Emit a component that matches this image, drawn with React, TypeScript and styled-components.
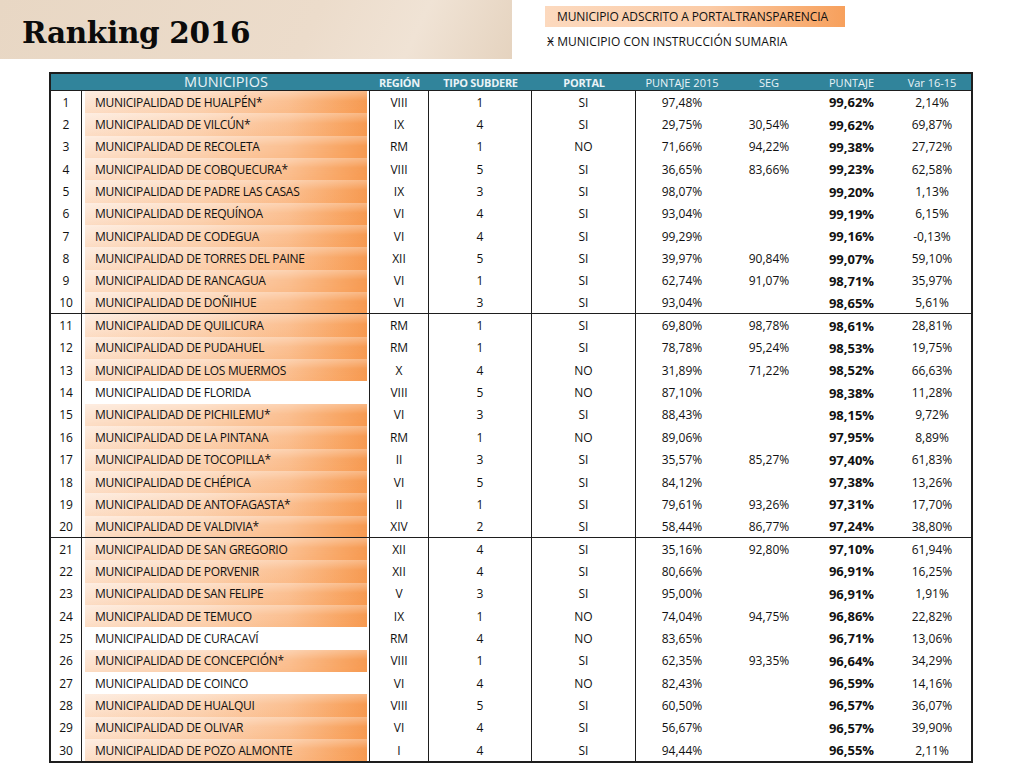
import React from "react";
import styled, { createGlobalStyle } from "styled-components";

const Global = createGlobalStyle`
  html, body { margin: 0; padding: 0; background: #ffffff; }
  body { font-family: "Open Sans", "Liberation Sans", sans-serif; color: #111; }
  * { box-sizing: border-box; }
`;

type Rec = {
  name: string;
  region: string;
  tipo: string;
  portal: string;
  p2015: string;
  seg: string;
  puntaje: string;
  variation: string;
  plain?: boolean;
};

const data: Rec[] = [
  { name: "HUALPÉN*", region: "VIII", tipo: "1", portal: "SI", p2015: "97,48%", seg: "", puntaje: "99,62%", variation: "2,14%" },
  { name: "VILCÚN*", region: "IX", tipo: "4", portal: "SI", p2015: "29,75%", seg: "30,54%", puntaje: "99,62%", variation: "69,87%" },
  { name: "RECOLETA", region: "RM", tipo: "1", portal: "NO", p2015: "71,66%", seg: "94,22%", puntaje: "99,38%", variation: "27,72%" },
  { name: "COBQUECURA*", region: "VIII", tipo: "5", portal: "SI", p2015: "36,65%", seg: "83,66%", puntaje: "99,23%", variation: "62,58%" },
  { name: "PADRE LAS CASAS", region: "IX", tipo: "3", portal: "SI", p2015: "98,07%", seg: "", puntaje: "99,20%", variation: "1,13%" },
  { name: "REQUÍNOA", region: "VI", tipo: "4", portal: "SI", p2015: "93,04%", seg: "", puntaje: "99,19%", variation: "6,15%" },
  { name: "CODEGUA", region: "VI", tipo: "4", portal: "SI", p2015: "99,29%", seg: "", puntaje: "99,16%", variation: "-0,13%" },
  { name: "TORRES DEL PAINE", region: "XII", tipo: "5", portal: "SI", p2015: "39,97%", seg: "90,84%", puntaje: "99,07%", variation: "59,10%" },
  { name: "RANCAGUA", region: "VI", tipo: "1", portal: "SI", p2015: "62,74%", seg: "91,07%", puntaje: "98,71%", variation: "35,97%" },
  { name: "DOÑIHUE", region: "VI", tipo: "3", portal: "SI", p2015: "93,04%", seg: "", puntaje: "98,65%", variation: "5,61%" },
  { name: "QUILICURA", region: "RM", tipo: "1", portal: "SI", p2015: "69,80%", seg: "98,78%", puntaje: "98,61%", variation: "28,81%" },
  { name: "PUDAHUEL", region: "RM", tipo: "1", portal: "SI", p2015: "78,78%", seg: "95,24%", puntaje: "98,53%", variation: "19,75%" },
  { name: "LOS MUERMOS", region: "X", tipo: "4", portal: "NO", p2015: "31,89%", seg: "71,22%", puntaje: "98,52%", variation: "66,63%" },
  { name: "FLORIDA", region: "VIII", tipo: "5", portal: "NO", p2015: "87,10%", seg: "", puntaje: "98,38%", variation: "11,28%", plain: true },
  { name: "PICHILEMU*", region: "VI", tipo: "3", portal: "SI", p2015: "88,43%", seg: "", puntaje: "98,15%", variation: "9,72%" },
  { name: "LA PINTANA", region: "RM", tipo: "1", portal: "NO", p2015: "89,06%", seg: "", puntaje: "97,95%", variation: "8,89%" },
  { name: "TOCOPILLA*", region: "II", tipo: "3", portal: "SI", p2015: "35,57%", seg: "85,27%", puntaje: "97,40%", variation: "61,83%" },
  { name: "CHÉPICA", region: "VI", tipo: "5", portal: "SI", p2015: "84,12%", seg: "", puntaje: "97,38%", variation: "13,26%" },
  { name: "ANTOFAGASTA*", region: "II", tipo: "1", portal: "SI", p2015: "79,61%", seg: "93,26%", puntaje: "97,31%", variation: "17,70%" },
  { name: "VALDIVIA*", region: "XIV", tipo: "2", portal: "SI", p2015: "58,44%", seg: "86,77%", puntaje: "97,24%", variation: "38,80%" },
  { name: "SAN GREGORIO", region: "XII", tipo: "4", portal: "SI", p2015: "35,16%", seg: "92,80%", puntaje: "97,10%", variation: "61,94%" },
  { name: "PORVENIR", region: "XII", tipo: "4", portal: "SI", p2015: "80,66%", seg: "", puntaje: "96,91%", variation: "16,25%" },
  { name: "SAN FELIPE", region: "V", tipo: "3", portal: "SI", p2015: "95,00%", seg: "", puntaje: "96,91%", variation: "1,91%" },
  { name: "TEMUCO", region: "IX", tipo: "1", portal: "NO", p2015: "74,04%", seg: "94,75%", puntaje: "96,86%", variation: "22,82%" },
  { name: "CURACAVÍ", region: "RM", tipo: "4", portal: "NO", p2015: "83,65%", seg: "", puntaje: "96,71%", variation: "13,06%", plain: true },
  { name: "CONCEPCIÓN*", region: "VIII", tipo: "1", portal: "SI", p2015: "62,35%", seg: "93,35%", puntaje: "96,64%", variation: "34,29%" },
  { name: "COINCO", region: "VI", tipo: "4", portal: "NO", p2015: "82,43%", seg: "", puntaje: "96,59%", variation: "14,16%", plain: true },
  { name: "HUALQUI", region: "VIII", tipo: "5", portal: "SI", p2015: "60,50%", seg: "", puntaje: "96,57%", variation: "36,07%" },
  { name: "OLIVAR", region: "VI", tipo: "4", portal: "SI", p2015: "56,67%", seg: "", puntaje: "96,57%", variation: "39,90%" },
  { name: "POZO ALMONTE", region: "I", tipo: "4", portal: "SI", p2015: "94,44%", seg: "", puntaje: "96,55%", variation: "2,11%" },
];

const COLS = "31px 288px 59px 103px 104px 92px 82px 83px 78px";

const Page = styled.div`
  width: 1024px;
  height: 768px;
  display: flex;
  flex-direction: column;
  overflow: hidden;
`;

const Top = styled.div`
  display: flex;
  height: 72px;
`;

const Banner = styled.div`
  width: 512px;
  height: 59px;
  background: linear-gradient(115deg, #e8d7c4 0%, #ecdccb 60%, #f0e3d5 80%, #e5d3bf 100%);
  display: flex;
  align-items: center;
  padding-left: 22px;
`;

const Title = styled.h1`
  margin: 0;
  font-family: "DejaVu Serif", "Liberation Serif", serif;
  font-weight: 900;
  font-size: 29.5px;
  letter-spacing: -0.3px;
  color: #0b0b0b;
  line-height: 1;
  padding-top: 6px;
`;

const Legend = styled.div`
  margin-left: 33px;
  padding-top: 6px;
  display: flex;
  flex-direction: column;
  gap: 7px;
`;

const LegendTag = styled.div`
  width: 300px;
  height: 21px;
  background: linear-gradient(to right, #fcd9be 0%, #fbcba6 55%, #f7a05c 100%);
  font-size: 12px;
  letter-spacing: -0.1px;
  line-height: 21px;
  padding-left: 12px;
  color: #111;
  white-space: nowrap;
`;

const LegendNote = styled.div`
  font-size: 12px;
  letter-spacing: 0.05px;
  line-height: 16px;
  padding-left: 2px;
  color: #111;
  white-space: nowrap;
`;

const Table = styled.div`
  margin-left: 49px;
  width: 924px;
  border: 2px solid #1e1e1e;
  display: flex;
  flex-direction: column;
`;

const HeaderRow = styled.div`
  display: grid;
  grid-template-columns: ${COLS};
  height: 17px;
  background: #31849b;
  border-bottom: 1px solid #1e1e1e;
`;

const HeadCell = styled.div<{ $big?: boolean; $bold?: boolean }>`
  display: flex;
  align-items: center;
  justify-content: center;
  color: #e9f3f7;
  font-size: ${(p) => (p.$big ? "14.5px" : "11px")};
  font-weight: ${(p) => (p.$bold ? 700 : 400)};
  line-height: 1;
  white-space: nowrap;
  letter-spacing: ${(p) => (p.$bold ? "-0.3px" : "0")};
`;

const Row = styled.div<{ $groupEnd?: boolean }>`
  display: grid;
  grid-template-columns: ${COLS};
  height: 22.35px;
  border-bottom: ${(p) => (p.$groupEnd ? "1.5px solid #1e1e1e" : "none")};
`;

const Cell = styled.div<{ $line?: boolean; $bold?: boolean }>`
  display: flex;
  align-items: center;
  justify-content: center;
  font-size: ${(p) => (p.$bold ? "13px" : "12px")};
  font-weight: ${(p) => (p.$bold ? 700 : 400)};
  border-right: ${(p) => (p.$line ? "1px solid #1e1e1e" : "none")};
  white-space: nowrap;
  color: #111;
`;

const NameCell = styled.div`
  display: flex;
  align-items: stretch;
  padding: 0 2px 0 3px;
  border-right: 1px solid #1e1e1e;
`;

const NameFill = styled.div<{ $plain?: boolean }>`
  flex: 1;
  display: flex;
  align-items: center;
  padding-left: 10px;
  font-size: 12px;
  letter-spacing: -0.3px;
  white-space: nowrap;
  color: #111;
  background: ${(p) =>
    p.$plain
      ? "#ffffff"
      : "linear-gradient(to bottom, rgba(255,255,255,0.3) 0%, rgba(255,255,255,0) 45%, rgba(247,150,70,0.12) 100%), linear-gradient(to right, #fde6d5 0%, #fcd6b8 40%, #fbc092 72%, #f8a563 92%, #f69a52 100%)"};
`;

export default function App() {
  return (
    <Page>
      <Global />
      <Top>
        <Banner>
          <Title>Ranking 2016</Title>
        </Banner>
        <Legend>
          <LegendTag>MUNICIPIO ADSCRITO A PORTALTRANSPARENCIA</LegendTag>
          <LegendNote>Ӿ MUNICIPIO CON INSTRUCCIÓN SUMARIA</LegendNote>
        </Legend>
      </Top>
      <Table>
        <HeaderRow>
          <HeadCell />
          <HeadCell $big>MUNICIPIOS</HeadCell>
          <HeadCell $bold>REGIÓN</HeadCell>
          <HeadCell $bold>TIPO SUBDERE</HeadCell>
          <HeadCell $bold>PORTAL</HeadCell>
          <HeadCell>PUNTAJE 2015</HeadCell>
          <HeadCell>SEG</HeadCell>
          <HeadCell>PUNTAJE</HeadCell>
          <HeadCell>Var 16-15</HeadCell>
        </HeaderRow>
        {data.map((r, i) => (
          <Row key={i} $groupEnd={i === 9 || i === 19}>
            <Cell $line>{i + 1}</Cell>
            <NameCell>
              <NameFill $plain={r.plain}>MUNICIPALIDAD DE {r.name}</NameFill>
            </NameCell>
            <Cell $line>{r.region}</Cell>
            <Cell $line>{r.tipo}</Cell>
            <Cell $line>{r.portal}</Cell>
            <Cell>{r.p2015}</Cell>
            <Cell>{r.seg}</Cell>
            <Cell $bold>{r.puntaje}</Cell>
            <Cell>{r.variation}</Cell>
          </Row>
        ))}
      </Table>
    </Page>
  );
}
